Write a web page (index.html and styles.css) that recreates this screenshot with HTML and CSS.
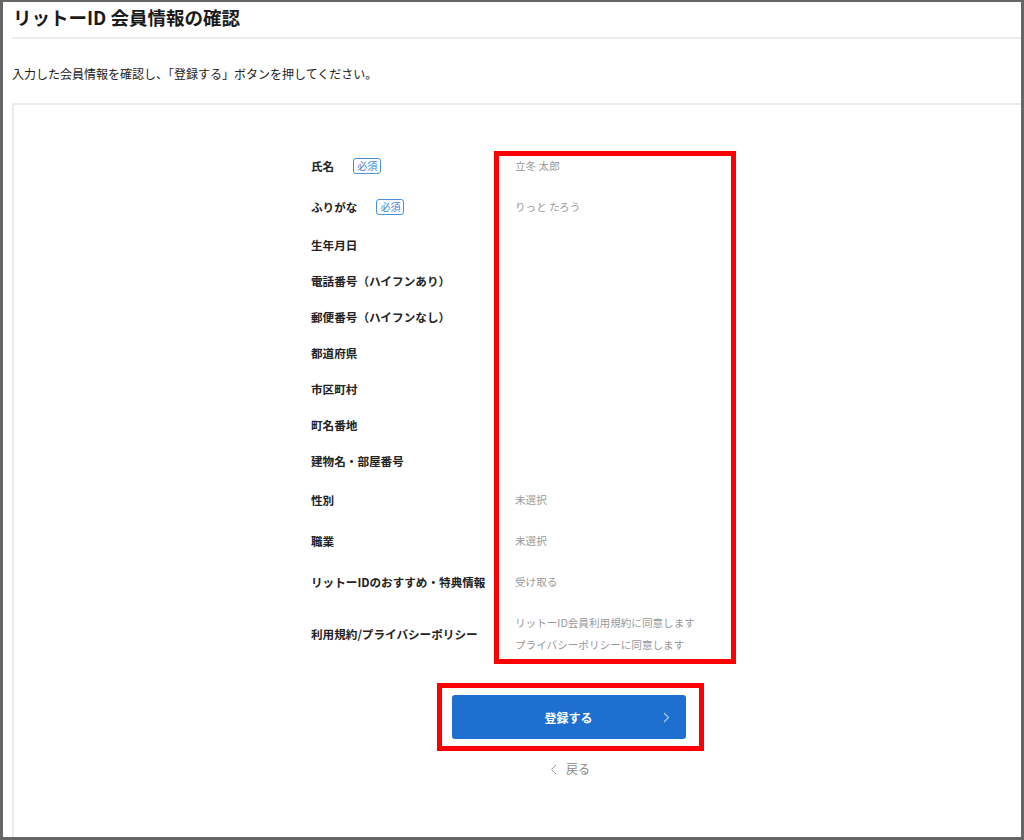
FILE: index.html
```html
<!DOCTYPE html>
<html lang="ja">
<head>
  <meta charset="UTF-8">
  <meta name="viewport" content="width=device-width, initial-scale=1.0">
  <title>リットーID 会員情報の確認</title>
  <link rel="stylesheet" href="styles.css">
</head>
<body>
  <div class="frame">
    <div class="page">
      <h1 class="title">リットーID 会員情報の確認</h1>
      <p class="lead">入力した会員情報を確認し、「登録する」ボタンを押してください。</p>

      <div class="card">
        <div class="confirm">
          <div class="row req">
            <div class="label">氏名<span class="badge">必須</span></div>
            <div class="value">立冬 太郎</div>
          </div>
          <div class="row req">
            <div class="label">ふりがな<span class="badge">必須</span></div>
            <div class="value">りっと たろう</div>
          </div>
          <div class="row">
            <div class="label">生年月日</div>
            <div class="value"></div>
          </div>
          <div class="row">
            <div class="label">電話番号（ハイフンあり）</div>
            <div class="value"></div>
          </div>
          <div class="row">
            <div class="label">郵便番号（ハイフンなし）</div>
            <div class="value"></div>
          </div>
          <div class="row">
            <div class="label">都道府県</div>
            <div class="value"></div>
          </div>
          <div class="row">
            <div class="label">市区町村</div>
            <div class="value"></div>
          </div>
          <div class="row">
            <div class="label">町名番地</div>
            <div class="value"></div>
          </div>
          <div class="row">
            <div class="label">建物名・部屋番号</div>
            <div class="value"></div>
          </div>
          <div class="row val">
            <div class="label">性別</div>
            <div class="value">未選択</div>
          </div>
          <div class="row val">
            <div class="label">職業</div>
            <div class="value">未選択</div>
          </div>
          <div class="row val">
            <div class="label">リットーIDのおすすめ・特典情報</div>
            <div class="value">受け取る</div>
          </div>
          <div class="row terms">
            <div class="label">利用規約/プライバシーポリシー</div>
            <div class="value">
              <div class="line">リットーID会員利用規約に同意します</div>
              <div class="line">プライバシーポリシーに同意します</div>
            </div>
          </div>

          <!-- annotation box over the value column -->
          <div class="highlight"></div>
        </div>

        <div class="actions">
          <div class="btn-box">
            <button class="submit">
              登録する
              <svg class="chev" width="7" height="11" viewBox="0 0 7 11"><polyline points="1,1 5.5,5.5 1,10" fill="none" stroke="#a9c8f0" stroke-width="1.2"/></svg>
            </button>
          </div>
          <a class="back" href="#">
            <svg width="7" height="11" viewBox="0 0 7 11"><polyline points="6,1 1.5,5.5 6,10" fill="none" stroke="#999" stroke-width="1"/></svg>
            戻る
          </a>
        </div>
      </div>
    </div>
  </div>
</body>
</html>
```

FILE: styles.css
```css
* {
  box-sizing: border-box;
}

body {
  margin: 0;
  background: #fff;
  font-family: "Noto Sans CJK JP", "Noto Sans", sans-serif;
  color: #222;
}

.frame {
  width: 1024px;
  height: 840px;
  border: 3px solid #666;
  border-top-width: 2px;
  overflow: hidden;
  background: #fff;
}

.page {
  padding-left: 9px;
}

.title {
  margin: 0;
  padding: 1px 0 6px 1px;
  font-size: 18.5px;
  line-height: 28px;
  font-weight: bold;
  color: #1a1a1a;
  border-bottom: 2px solid #ececec;
}

.lead {
  margin: 26px 0 20px 0;
  font-size: 12px;
  line-height: 18px;
  color: #222;
}

.card {
  width: 1114px;
  height: 760px;
  border-top: 2px solid #ebebeb;
  border-left: 2px solid #ebebeb;
  padding-top: 40px;
}

.confirm {
  position: relative;
  width: 518px;
  margin: 0 auto;
}

.row {
  display: flex;
  align-items: center;
  height: 36px;
}

.row.req { height: 41px; }
.row.val { height: 41px; }
.row.terms { height: 64px; }

.label {
  width: 204px;
  flex-shrink: 0;
  font-size: 11.6px;
  font-weight: bold;
  color: #222;
  white-space: nowrap;
}

.badge {
  display: inline-block;
  margin-left: 19px;
  padding: 1px 3px;
  border: 1px solid #4a8fdc;
  border-radius: 3px;
  font-size: 10px;
  line-height: 12px;
  font-weight: normal;
  color: #3a85d6;
  vertical-align: 1px;
}

.value {
  font-size: 10.6px;
  color: #999;
}

.value .line {
  line-height: 22px;
}

.highlight {
  position: absolute;
  top: 6px;
  left: 183px;
  width: 242px;
  height: 513px;
  border: 5px solid #ff0000;
  pointer-events: none;
}

.actions {
  display: flex;
  flex-direction: column;
  align-items: center;
  margin-top: 17px;
}

.btn-box {
  padding: 7px 13px 7px 10px;
  border: 5px solid #ff0000;
}

.submit {
  position: relative;
  display: block;
  width: 234px;
  height: 44px;
  border: none;
  border-radius: 3px;
  background: #1f6fd0;
  color: #fff;
  font-family: inherit;
  font-size: 12px;
  font-weight: bold;
  cursor: pointer;
}

.submit .chev {
  position: absolute;
  right: 16px;
  top: 17px;
}

.back {
  display: flex;
  align-items: center;
  gap: 9px;
  margin-top: 9px;
  font-size: 12px;
  line-height: 18px;
  color: #888;
  text-decoration: none;
}
```
